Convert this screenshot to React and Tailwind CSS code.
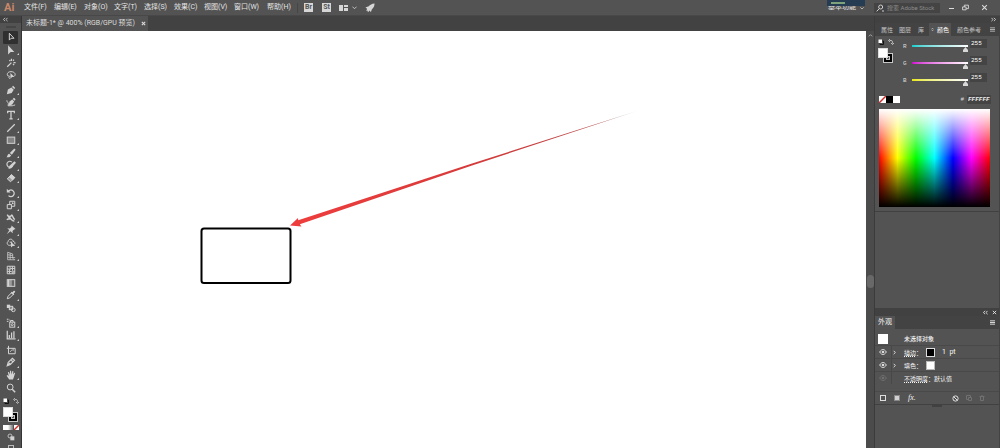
import React from "react";

const menus = ["文件(F)", "编辑(E)", "对象(O)", "文字(T)", "选择(S)", "效果(C)", "视图(V)", "窗口(W)", "帮助(H)"];

const fill = { fill: "currentColor", stroke: "none" };

const toolGroups = [
  [
    { name: "选择工具", active: true, art: <path d="M4 1.500v8.200l2.200-2.200h3.400z" /> },
    { name: "直接选择工具", more: true, art: <path {...fill} d="M2.500 .3v11l3-3h4.500z" /> },
    { name: "魔棒工具", art: <path d="M1.500 10.500l5-5M6.500 1v2.500M9 5.500h2.500M4 2.500l1.200 1.200M9.500 2l-1 1.300M8.500 7l1.200 1.500" strokeWidth="1.500" /> },
    { name: "套索工具", art: <><path d="M2.500 7.500C.5 5.500 1.500 2 6 2s6 3 4.200 5.300M2.500 7.500c1.500-1.500 2.500.5 1 1.500l1 1.500" /><path {...fill} d="M5.300 3.500v7l2-2h3z" /></> },
  ],
  [
    { name: "钢笔工具", more: true, art: <path {...fill} d="M1 11l1.300-5.500L6.500 3l2.800 2.800-2.500 3.900zM7.200 2.300L8.500 1l2.600 2.600-1.300 1.300z" /> },
    { name: "曲率工具", art: <><path {...fill} d="M3 10.500l1.200-5L7.500 3l2.300 2.500L7.500 9zM8 2.400L9.500.8l2 2L10.300 4.500z" /><path d="M1 4c0 3 3 2 1.500 6.500h5c1.500 0 2-1 3.500-1" /></> },
    { name: "文字工具", more: true, art: <path d="M2 3.800V1.700h8v2.100M6 1.700v8.800M4 10.500h4" strokeWidth="1.500" /> },
    { name: "直线段工具", more: true, art: <path d="M1.500 10.500l9-9" strokeWidth="1.400" /> },
    { name: "矩形工具", more: true, art: <rect x="1.500" y="2.500" width="9" height="7.500" fill="#858585" /> },
    { name: "画笔工具", more: true, art: <path {...fill} d="M.5 11c1.500-.5.800-3.500 3.300-4.200L6.200 9C5 11 3 11.500.5 11zM4.600 6L10 .7l1.500 1.300L7 8.200z" /> },
    { name: "Shaper 工具", more: true, art: <><path d="M7 2.500C4 0 0 3 1.500 6.500S7 9.500 8 7" strokeWidth="1.400" /><path {...fill} d="M3 10.800l1-3.500L10 1.500 12 3.300 6.200 9.800z" /></> },
    { name: "橡皮擦工具", more: true, art: <><path d="M1.500 7l5-5 4 3.500-5 5z" fill="#9a9a9a" /><path {...fill} d="M3.500 4.800L6.500 1.500l4.500 4L8 9z" /></> },
  ],
  [
    { name: "旋转工具", more: true, art: <><path d="M2.500 4.200a4 4 0 1 1 .5 5" strokeWidth="1.500" /><path {...fill} d="M1 1v4.500h4.500z" /></> },
    { name: "比例缩放工具", more: true, art: <path d="M1.500 5.500h5v5h-5zM4.500 5.500v-4h6v6h-4M6.500 5.500l2-2M7 3.500h1.500V5" /> },
    { name: "宽度工具", more: true, art: <path d="M1.500 2l2 3c1-2 2 0 3-2s1.500 3 4 5M1 8c2-2 3 0 4-1s2 3 5 2.500M4 4.500L5.500 7" strokeWidth="1.800" /> },
    { name: "操控变形工具", more: true, art: <path {...fill} d="M6.500.5l5 4.300-1.800.7L7.800 7.300l.3 2.700-2.800-2.500L.8 11.200l3.200-5L1.500 4l3 .3L6.500 2.500z" /> },
    { name: "形状生成器工具", more: true, art: <><path d="M6 8.500C2 10 0 6 2.500 4.200 3 .5 8 .5 8.500 4c2 0 2.500 2 2 3.500M4.500 5h3" /><path {...fill} d="M6 4.500v7l2-2h3z" /></> },
    { name: "透视网格工具", more: true, art: <path d="M2 1.500v9M2 1.500l6 2v5M2 4.500l6 1M2 7.500l9 .5M2 10.500h9M5 2.500v8M8 8.500l2 2" opacity=".75" /> },
  ],
  [
    { name: "网格工具", art: <><path d="M1.500 1.500h9v9h-9z" /><path d="M1.500 4.500c3 2 6-2 9 0M1.500 8c3-2 6 2 9 0M4.500 1.500c2 3-2 6 0 9M8 1.500c-2 3 2 6 0 9" /></> },
    { name: "渐变工具", art: <><rect x="1.500" y="2" width="9" height="8" fill="#666" /><path {...fill} d="M2 2h2v8H2z" /><path {...fill} opacity=".5" d="M4 2h3v8H4z" /></> },
    { name: "吸管工具", more: true, art: <><path d="M1.500 10.500l1-3 4-4 2 2-4 4z" /><path {...fill} d="M5.800 3l1-1 1 .8L9.300 1c1-.8 2.300.5 1.500 1.600L9.200 4.200l.8 1-1 1z" /></> },
    { name: "混合工具", art: <><rect {...fill} x="1" y="2" width="4" height="4" /><rect x="4" y="4" width="4" height="4" fill="#888" /><circle cx="8.800" cy="8.200" r="2.200" /></> },
  ],
  [
    { name: "符号喷枪工具", more: true, art: <><rect x="4.500" y="5" width="6" height="6" /><path d="M5.500 5V3h3v2M1 1.500h2M1 4h2M4 2.500h1" /><circle cx="7.500" cy="8" r="1.200" /></> },
    { name: "柱形图工具", more: true, art: <path d="M1.500 1v9.500h10M4 9.500V6M6.700 9.500V3M9.500 9.500V1.500" strokeWidth="1.500" /> },
  ],
  [
    { name: "画板工具", art: <path d="M3 1v9.500h8V4H1M5 8l2-2M8.500 4v3" /> },
    { name: "切片工具", more: true, art: <path d="M1.500 10.500l1.200-4 5-5 2.500 2.500-5 5zM6 3.500L8.500 6M1.500 10.500L5 7" strokeWidth="1.400" /> },
    { name: "抓手工具", more: true, art: <path {...fill} d="M3.800 11.500L.7 7l1-.9L3.300 7.300 2.200 2.800l1.300-.3 1.100 3L4.800.8h1.300l.4 4.500L7.700 1.200l1.200.3-.5 4L10 3.200l1 .5L9.300 9l-1 2.500z" /> },
    { name: "缩放工具", art: <><circle cx="5" cy="4.800" r="3.500" /><path d="M7.500 7.500l3.500 3.500" strokeWidth="1.800" /></> },
  ],
];

function Glyph({ children, className = "size-[10px]" }) {
  return (
    <svg viewBox="0 0 12 12" className={className} fill="none" stroke="currentColor" strokeWidth="1.200" aria-hidden="true">
      {children}
    </svg>
  );
}

function Tool({ tool }) {
  return (
    <button
      type="button"
      aria-label={tool.name}
      className={`relative flex w-[15px] flex-1 items-center justify-center rounded-[1px] ${tool.active ? "bg-[#303030]" : ""}`}
    >
      <Glyph>{tool.art}</Glyph>
      {tool.more && (
        <svg viewBox="0 0 2 2" className="absolute -right-px bottom-px size-[2px]" aria-hidden="true">
          <path d="M2 0v2H0z" fill="#d0d0d0" />
        </svg>
      )}
    </button>
  );
}

function FillStroke() {
  return (
    <div className="grid w-4 grid-cols-3 grid-rows-3">
      <div className="col-span-2 col-start-2 row-span-2 row-start-2 size-[10px] border border-[#c8c8c8] bg-black p-[2px]">
        <div className="size-full border border-[#c8c8c8] bg-[#535353]" />
      </div>
      <div className="z-10 col-span-2 col-start-1 row-span-2 row-start-1 size-[10px] border border-[#dddddd] bg-white" />
    </div>
  );
}

function SwapIcons() {
  return (
    <div className="flex w-4 items-center justify-between">
      <Glyph className="size-[6px]">
        <rect x="1" y="1" width="7" height="7" fill="#fff" stroke="none" />
        <path d="M9 4h2v7H4V9" stroke="#111" strokeWidth="2" />
      </Glyph>
      <Glyph className="size-[6px]">
        <path d="M3 3h3c3 0 3 2 3 6M4 0L1 3l3 3M6 8l3 3 3-3" strokeWidth="1.500" />
      </Glyph>
    </div>
  );
}

function NoneSwatch() {
  return (
    <svg viewBox="0 0 7 7" className="size-[7px]" aria-hidden="true">
      <path d="M0 0h7v7H0z" fill="#fff" />
      <path d="M0 7L7 0" stroke="#d02b2b" strokeWidth="1.500" />
    </svg>
  );
}

function Toolbar() {
  return (
    <aside className="flex w-[22px] shrink-0 flex-col items-center overflow-hidden border-r border-[#353535] bg-[#535353] text-[#d2d2d2]">
      <div className="flex h-[7px] w-full shrink-0 items-center bg-[#414141] pl-[3px]">
        <Glyph className="size-[5px]"><path d="M5 2L1 6l4 4M11 2L7 6l4 4" strokeWidth="2" /></Glyph>
      </div>
      <div className="my-[3px] h-[2px] w-[10px] shrink-0 border-y border-[#454545]" />
      <div className="flex h-[363px] shrink-0 flex-col gap-[2px]">
        {toolGroups.map((group, i) => (
          <div key={i} className="flex flex-col" style={{ flex: group.length }}>
            {group.map((tool) => <Tool key={tool.name} tool={tool} />)}
          </div>
        ))}
      </div>
      <div className="mt-[4px] flex shrink-0 flex-col items-center gap-[3px]">
        <SwapIcons />
        <FillStroke />
      </div>
      <div className="mt-[3px] flex shrink-0 items-center">
        <span className="size-[5px] bg-white" />
        <span className="mr-px size-[5px] bg-linear-to-r from-white to-[#777777]" />
        <svg viewBox="0 0 7 7" className="size-[5px]" aria-hidden="true">
          <path d="M0 0h7v7H0z" fill="#fff" />
          <path d="M0 7L7 0" stroke="#d02b2b" strokeWidth="2" />
        </svg>
      </div>
      <button type="button" aria-label="绘图模式" className="mt-[3px] shrink-0">
        <Glyph className="size-[8px]"><circle cx="4.500" cy="4.500" r="3" /><path {...fill} d="M5 5h6v6H5z" /></Glyph>
      </button>
      <button type="button" aria-label="屏幕模式" className="mt-1 h-[4px] w-[6px] shrink-0 border border-[#bdbdbd]" />
    </aside>
  );
}

function Header() {
  return (
    <header className="flex h-[15px] shrink-0 items-center bg-[#535353] text-[7px]">
      <div className="w-[22px] pl-1 text-[11px] leading-none font-bold text-[#c9886a]">Ai</div>
      <nav className="flex">
        {menus.map((m, i) => (
          <button key={m} type="button" className={`${i === 7 ? "w-[33px]" : "w-[30px]"} pl-[2px] text-left leading-[15px] whitespace-nowrap text-[#e4e4e4]`}>
            {m}
          </button>
        ))}
      </nav>
      <div className="ml-[2px] flex items-center text-[#d6d6d6]">
        <span className="h-[10px] w-px bg-[#464646]" />
        <button type="button" className="ml-[6px] size-[9px] bg-[#d6d6d6] text-center text-[7px] leading-[9px] font-bold text-[#555555]">Br</button>
        <button type="button" className="ml-[9px] size-[9px] bg-[#d6d6d6] text-center text-[7px] leading-[9px] font-bold text-[#555555]">St</button>
        <button type="button" aria-label="排列文档" className="ml-2 flex items-center gap-1">
          <span className="flex h-[6px] gap-px">
            <span className="w-[4px] bg-current" />
            <span className="flex w-[4px] flex-col gap-px"><span className="flex-1 bg-current" /><span className="flex-1 bg-current" /></span>
          </span>
          <Glyph className="size-[5px]"><path d="M1 4l5 5 5-5" strokeWidth="2" /></Glyph>
        </button>
        <button type="button" aria-label="GPU 性能" className="ml-2">
          <Glyph><path {...fill} d="M11.500.5C8 .8 6 2 4.500 4L.5 5.500l2 1.300-1 2.700 1.500-.5.500 2 2.200-2 1.300 2 1.300-3.500C10.500 5.500 11.300 3.500 11.500.5z" /></Glyph>
        </button>
      </div>
      <div className="relative ml-auto flex h-full w-[38px] items-center">
        <button type="button" className="flex w-full items-center justify-between px-px text-[7px] leading-[15px] whitespace-nowrap text-[#e4e4e4]">
          基本功能
          <Glyph className="size-[4px]"><path d="M1 4l5 5 5-5" strokeWidth="2" /></Glyph>
        </button>
        <div className="absolute top-0 left-0 flex h-[6px] w-full items-center bg-[#263c52] pl-1"><span className="h-[2px] w-[14px] bg-[#7ca37c]" /></div>
      </div>
      <label className="ml-[9px] flex h-[10px] w-[66px] items-center gap-[3px] bg-[#444444] pl-[2px] text-[#d0d0d0]">
        <Glyph className="size-[8px] shrink-0"><circle cx="7" cy="4.500" r="3" strokeWidth="1.500" /><path d="M5 7l-4 4M9 10l1.500 1L12 10" strokeWidth="1.500" /></Glyph>
        <input aria-label="搜索" placeholder="搜索 Adobe Stock" className="w-full min-w-0 bg-transparent text-[6px] outline-none placeholder:text-[#8c8c8c]" />
      </label>
      <div className="mr-3 ml-[9px] flex items-center gap-[8px] text-[#dddddd]">
        <button type="button" aria-label="最小化" className="mt-px h-px w-[5px] bg-current" />
        <button type="button" aria-label="还原"><Glyph className="size-[7px]"><path d="M1 5h6v5H1zM4 5V2h7v6H7" strokeWidth="1.500" /></Glyph></button>
        <button type="button" aria-label="关闭" className="ml-1"><Glyph className="size-[7px]"><path d="M2 2l8 8M10 2l-8 8" strokeWidth="1.800" /></Glyph></button>
      </div>
    </header>
  );
}

function Artboard() {
  return (
    <main className="min-w-0 flex-1 overflow-hidden bg-white">
      <svg viewBox="0 0 844 417" width="844" height="417" className="block" role="img" aria-label="画板">
        <defs>
          <linearGradient id="arrow" x1="1" y1="0" x2="0" y2="0">
            <stop offset="0" stopColor="#666" stopOpacity=".6" />
            <stop offset=".12" stopColor="#b84444" />
            <stop offset=".5" stopColor="#d83a3a" />
            <stop offset="1" stopColor="#ef3d3d" />
          </linearGradient>
        </defs>
        <rect x="179.500" y="197.500" width="89" height="54.500" rx="2.500" fill="none" stroke="#000" strokeWidth="2" />
        <path d="M268 194.500L276 187l.2 2.200L450 132.500 615 80 450 134.500 277.800 193.200l1.700 2.300z" fill="url(#arrow)" />
      </svg>
    </main>
  );
}

const channels = [
  { id: "R", track: "from-[#00cfcf]" },
  { id: "G", track: "from-[#d000d0]" },
  { id: "B", track: "from-[#e8e800]" },
];

function MenuIcon() {
  return (
    <button type="button" aria-label="面板菜单" className="mr-1 ml-auto">
      <Glyph className="size-[5px]"><path d="M0 2h12M0 6h12M0 10h12" strokeWidth="2" /></Glyph>
    </button>
  );
}

function ColorPanel() {
  return (
    <section className="border-b border-[#414141] bg-[#535353] pb-1">
      <div className="flex h-[13px] items-center bg-[#434343] text-[6px] leading-[13px] whitespace-nowrap text-[#c4c4c4]">
        <button type="button" className="w-[20px] pl-1">属性</button>
        <button type="button" className="w-[18px] pl-[2px]">图层</button>
        <button type="button" className="w-[16px]">库</button>
        <button type="button" className="flex h-full w-[22px] items-center gap-[3px] bg-[#535353] pl-[2px] text-white">
          <Glyph className="h-[5px] w-[3px] shrink-0"><path d="M2 5l4-4 4 4M2 7l4 4 4-4" strokeWidth="2" /></Glyph>颜色
        </button>
        <button type="button" className="ml-[6px] text-left">颜色参考</button>
        <MenuIcon />
      </div>
      <div className="flex px-[3px] pt-[3px]">
        <div className="flex w-[22px] flex-col gap-[3px]"><SwapIcons /><FillStroke /></div>
        <div className="flex flex-1 flex-col">
          {channels.map((c) => (
            <div key={c.id} className="flex h-[17px] items-start">
              <label htmlFor={c.id} className="w-[12px] pt-[3px] pl-[3px] font-[Liberation_Mono,monospace] text-[6px] leading-[9px]">{c.id}</label>
              <input
                id={c.id}
                type="range"
                min="0"
                max="255"
                defaultValue="255"
                className={`mt-[6px] h-[2px] w-[56px] appearance-none bg-linear-to-r ${c.track} to-white [&::-webkit-slider-thumb]:mt-[7px] [&::-webkit-slider-thumb]:h-[5px] [&::-webkit-slider-thumb]:w-[5px] [&::-webkit-slider-thumb]:appearance-none [&::-webkit-slider-thumb]:bg-[#d8d8d8] [&::-webkit-slider-thumb]:[clip-path:polygon(50%_0,100%_60%,100%_100%,0_100%,0_60%)]`}
              />
              <input aria-label={`${c.id} 值`} defaultValue="255" className="ml-[2px] h-[9px] w-[17px] bg-[#444444] pl-px font-[Liberation_Mono,monospace] text-[6px] text-white outline-none" />
            </div>
          ))}
        </div>
      </div>
      <div className="mt-1 flex h-[11px] items-center pr-[8px] pl-[4px]">
        <NoneSwatch />
        <span className="size-[7px] bg-black" />
        <span className="size-[7px] bg-white" />
        <label htmlFor="hex" className="ml-auto font-[Liberation_Mono,monospace] text-[6px]">#</label>
        <input id="hex" defaultValue="FFFFFF" className="ml-[3px] h-[9px] w-[24px] bg-[#444444] pl-px font-[Liberation_Mono,monospace] text-[6px] font-bold text-[#eeeeee] italic outline-none" />
      </div>
      <div className="mt-1 mr-[9px] ml-[4px] h-[98px] bg-[linear-gradient(to_bottom,#fff,transparent_50%,#000),linear-gradient(to_right,#f00,#ff0,#0f0,#0ff,#00f,#f0f,#f00)]" />
    </section>
  );
}

function Eye({ dim }) {
  return (
    <button type="button" aria-label="切换可见性" className={`flex h-full w-[17px] items-center justify-center border-r border-[#484848] ${dim ? "text-[#707070]" : "text-[#dddddd]"}`}>
      <Glyph className="size-[8px]"><path d="M1 6c3-5 7-5 10 0-3 5-7 5-10 0z" strokeWidth="1.500" /><circle {...fill} cx="6" cy="6" r="2" /></Glyph>
    </button>
  );
}

function Chevron() {
  return <Glyph className="size-[5px]"><path d="M4 2l4 4-4 4" strokeWidth="2" /></Glyph>;
}

function AppearancePanel() {
  return (
    <section className="bg-[#535353] text-[6px] text-[#f4f4f4]">
      <div className="flex h-[7px] items-center justify-end gap-1 bg-[#414141] pr-[2px]">
        <Glyph className="size-[5px]"><path d="M5 2L1 6l4 4M11 2L7 6l4 4" strokeWidth="2" /></Glyph>
        <Glyph className="size-[5px]"><path d="M2 2l8 8M10 2l-8 8" strokeWidth="2" /></Glyph>
      </div>
      <div className="flex h-[13px] items-center bg-[#434343]">
        <button type="button" className="h-full w-[20px] bg-[#535353] text-[7px] leading-[13px]">外观</button>
        <MenuIcon />
      </div>
      <div className="flex flex-col pt-[3px] leading-[13px]">
        <div className="flex h-[13px] items-center pl-[3px] font-medium"><span className="mr-[16px] size-[10px] bg-white" />未选择对象</div>
        <div className="flex h-[13px] items-center border-t border-[#494949]">
          <Eye /><Chevron />
          <span className="w-[29px] pl-[7px] whitespace-nowrap"><u className="decoration-dotted underline-offset-1">描边</u>：</span>
          <span className="size-[9px] border border-[#dddddd] bg-black" />
          <span className="ml-[7px] text-[7px]">1&nbsp; pt</span>
        </div>
        <div className="flex h-[13px] items-center border-t border-[#494949]">
          <Eye /><Chevron />
          <span className="w-[29px] pl-[7px] whitespace-nowrap">填色：</span>
          <span className="size-[9px] border border-[#bbbbbb] bg-white" />
        </div>
        <div className="flex h-[13px] items-center border-t border-[#494949]">
          <Eye dim />
          <span className="pl-3 whitespace-nowrap"><u className="decoration-dotted underline-offset-1">不透明度</u>：默认值</span>
        </div>
      </div>
      <div className="mt-[7px] flex h-[13px] items-center border-t border-[#494949] pr-[14px] pl-[5px]">
        <button type="button" aria-label="添加新描边" className="size-[6px] border border-[#dddddd]" />
        <button type="button" aria-label="添加新填色" className="ml-2 size-[6px] border border-[#888888] bg-[#d0d0d0]" />
        <button type="button" className="ml-2 font-[Liberation_Serif,serif] text-[8px] italic">fx.</button>
        <button type="button" aria-label="清除外观" className="mr-[7px] ml-auto"><Glyph className="size-[7px]"><circle cx="6" cy="6" r="4.500" strokeWidth="1.500" /><path d="M3 3l6 6" strokeWidth="1.500" /></Glyph></button>
        <button type="button" aria-label="复制所选项目" className="mr-[7px] text-[#717171]"><Glyph className="size-[6px]"><path d="M1 1h8v4M1 1v8h4M5 5h6v6H5z" strokeWidth="2" /></Glyph></button>
        <button type="button" aria-label="删除所选项目" className="text-[#717171]"><Glyph className="size-[6px]"><path d="M1 3h10M3 3v8h6V3M5 1h2" strokeWidth="2" /></Glyph></button>
      </div>
    </section>
  );
}

export default function App() {
  return (
    <div lang="zh-CN" className="flex h-screen flex-col overflow-hidden bg-[#535353] font-[Roboto,'Noto_Sans_CJK_SC',sans-serif] text-[#dddddd]">
      <Header />
      <div className="flex min-h-0 flex-1 border-t border-[#484848]">
        <Toolbar />
        <div className="flex min-w-0 flex-1 flex-col">
          <div className="flex h-[15px] shrink-0 bg-[#424242]">
            <div className="flex w-[126px] items-center justify-between bg-[#535353] pr-[2px] pl-1 text-[7px] leading-[15px] whitespace-nowrap">
              <span>未标题-1* @ 400% (RGB/GPU 预览)</span>
              <button type="button" aria-label="关闭文档"><Glyph className="size-[5px]"><path d="M2 2l8 8M10 2l-8 8" strokeWidth="2.500" /></Glyph></button>
            </div>
          </div>
          <div className="flex min-h-0 flex-1">
            <Artboard />
            <div className="flex w-[8px] shrink-0 flex-col items-center bg-[#4b4b4b]">
              <Glyph className="mt-[2px] size-[5px] shrink-0"><path d="M2 8l4-4 4 4" strokeWidth="1.500" /></Glyph>
              <div className="mt-[237px] h-[13px] w-[7px] shrink-0 rounded-full bg-[#686868]" />
            </div>
          </div>
        </div>
        <aside className="flex w-[126px] shrink-0 flex-col border-l border-[#3b3b3b]">
          <div className="flex h-[7px] shrink-0 items-center justify-end bg-[#414141] pr-1">
            <Glyph className="size-[5px]"><path d="M1 2l4 4-4 4M7 2l4 4-4 4" strokeWidth="2" /></Glyph>
          </div>
          <div className="flex min-h-0 flex-1 flex-col border-r border-[#434343]">
            <ColorPanel />
            <div className="h-[97px] shrink-0 border-b border-[#414141] bg-[#535353]" />
            <AppearancePanel />
            <div className="flex flex-1 justify-center border-t border-[#414141]"><span className="h-[2px] w-[10px] bg-[#414141]" /></div>
          </div>
        </aside>
      </div>
    </div>
  );
}
